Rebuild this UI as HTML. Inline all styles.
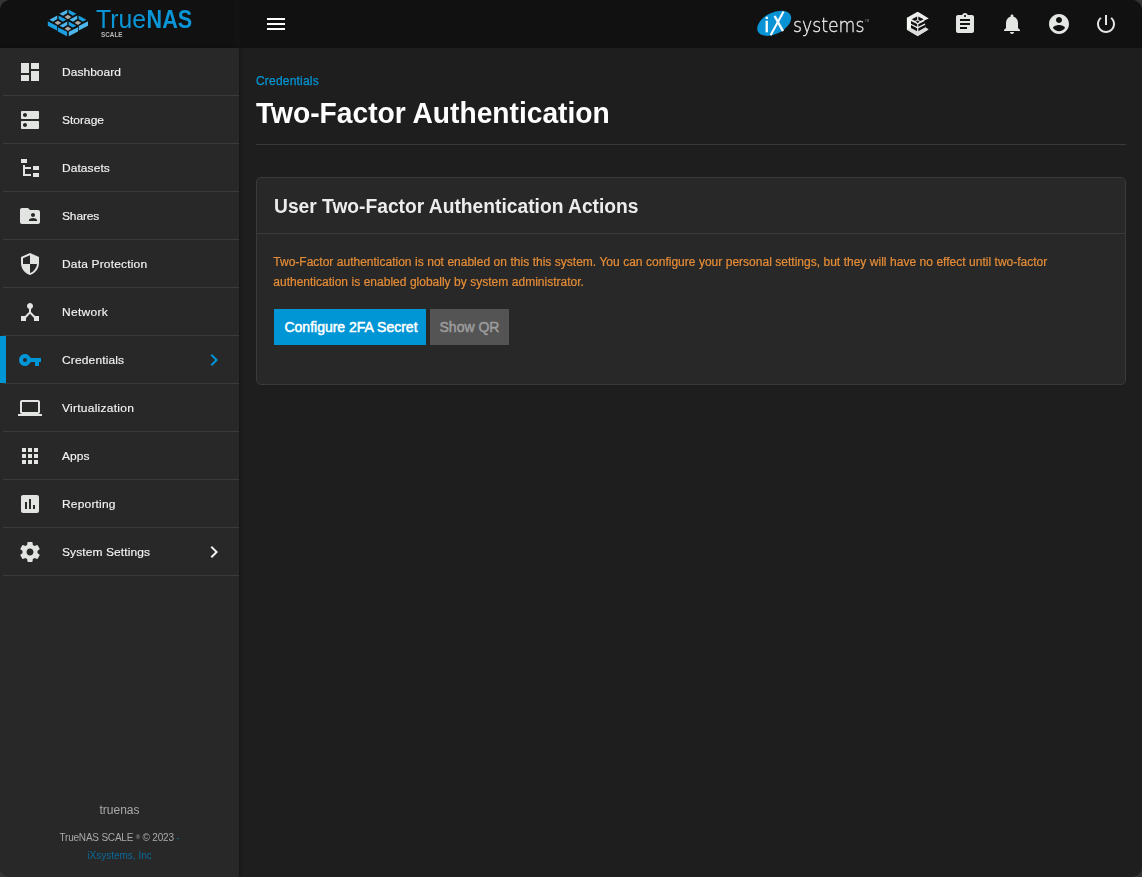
<!DOCTYPE html>
<html lang="en">
<head>
<meta charset="utf-8">
<title>TrueNAS - Two-Factor Authentication</title>
<style>
*{box-sizing:border-box;}
html,body{margin:0;padding:0;}
body{width:1142px;height:877px;overflow:hidden;background:#343434;font-family:"Liberation Sans",sans-serif;color:#fff;}
#app{position:relative;width:1142px;height:877px;border-radius:10px;overflow:hidden;background:#1e1e1e;}
#topbar{position:absolute;left:0;top:0;width:1142px;height:48px;background:#111111;}
#sidebar{position:absolute;left:0;top:48px;width:239px;height:829px;background:#282828;box-shadow:1px 0 3px rgba(0,0,0,.35);}
#topshade{position:absolute;left:0;top:0;width:240px;height:48px;background:linear-gradient(90deg,rgba(255,255,255,0) 0,rgba(255,255,255,0) 230px,rgba(255,255,255,.012) 239px,rgba(0,0,0,.0) 240px);}
.logo{position:absolute;left:0;top:0;will-change:transform;}
.tb-icon{position:absolute;top:12px;width:24px;height:24px;fill:#e4e6e4;}
ul.nav{list-style:none;margin:0;padding:0;}
ul.nav li{position:relative;height:48px;margin-left:3px;border-bottom:1px solid #3a3a3a;}
ul.nav li svg.ic{position:absolute;left:15px;top:12px;width:24px;height:24px;fill:#e2e4e2;}
ul.nav li span{position:absolute;left:59px;top:0;line-height:48px;font-size:12px;color:#f4f4f4;white-space:nowrap;letter-spacing:0;transform:scaleY(.94);transform-origin:0 28px;-webkit-text-stroke:.15px #f4f4f4;}
ul.nav li svg.chev{position:absolute;left:199px;top:12px;width:24px;height:24px;fill:#f0f0f0;}
ul.nav li.active:before{content:"";position:absolute;left:-3px;top:0;width:6px;height:47px;background:#0095d5;}
ul.nav li.active svg.ic, ul.nav li.active svg.chev{fill:#0095d5;}
.foot{position:absolute;left:0;width:239px;text-align:center;white-space:nowrap;}
#main{position:absolute;left:240px;top:48px;width:902px;height:829px;}
.crumb{position:absolute;left:16px;top:26px;font-size:12px;line-height:14px;color:#0095d5;white-space:nowrap;letter-spacing:.2px;-webkit-text-stroke:.25px #0095d5;}
h1{position:absolute;left:16px;top:47px;margin:0;font-size:29.5px;line-height:36px;transform:scaleX(.955);font-weight:bold;color:#fff;white-space:nowrap;transform-origin:0 50%;}
.hr{position:absolute;left:16px;top:96px;width:870px;height:1px;background:#3a3a3a;}
.card{position:absolute;left:16px;top:129px;width:870px;height:208px;background:#282828;border:1px solid #3a3a3a;border-radius:5px;}
.card h3{position:absolute;left:16.5px;top:14px;margin:0;font-size:20px;line-height:28px;transform:scaleX(.961);font-weight:bold;color:#ececec;white-space:nowrap;transform-origin:0 50%;}
.card .sep{position:absolute;left:0;top:55px;width:868px;height:1px;background:#3a3a3a;}
.card p{position:absolute;left:16.3px;top:74px;width:800px;word-spacing:.17px;margin:0;font-size:12px;line-height:20px;color:#e68d37;-webkit-text-stroke:.2px #e68d37;}
.btn{position:absolute;top:131px;height:36px;line-height:36px;font-size:14px;font-weight:normal;text-align:center;white-space:nowrap;letter-spacing:0;-webkit-text-stroke:.5px currentColor;}
.btn.primary{left:17px;width:152px;padding-left:2px;background:#0095d5;color:#fff;}
.btn.disabled{left:173px;width:79px;background:#545454;color:#9c9c9c;}
</style>
</head>
<body>
<div id="app">
  <div id="topbar">
    <div id="topshade"></div>
    <svg class="logo" width="240" height="48" viewBox="0 0 240 48">
<polygon points="59.40,13.85 67.25,9.70 67.25,13.10 63.00,15.75" fill="#4db7ec"/>
<polygon points="76.40,13.85 68.55,9.70 68.55,13.10 72.80,15.75" fill="#1a9fe1"/>
<polygon points="64.50,16.90 67.90,14.80 71.30,16.90 67.90,19.20" fill="#a9a9a9"/>
<circle cx="67.90" cy="17.10" r="0.42" fill="#f0c060"/>
<polygon points="49.40,19.75 57.25,15.60 57.25,19.00 53.00,21.65" fill="#4db7ec"/>
<polygon points="66.40,19.75 58.55,15.60 58.55,19.00 62.80,21.65" fill="#1a9fe1"/>
<polygon points="54.50,22.80 57.90,20.70 61.30,22.80 57.90,25.10" fill="#a9a9a9"/>
<circle cx="57.90" cy="23.00" r="0.42" fill="#f0c060"/>
<polygon points="47.80,21.30 57.05,25.95 57.05,30.40 47.80,25.70" fill="#1a9fe1"/>
<polygon points="69.40,19.75 77.25,15.60 77.25,19.00 73.00,21.65" fill="#4db7ec"/>
<polygon points="86.40,19.75 78.55,15.60 78.55,19.00 82.80,21.65" fill="#1a9fe1"/>
<polygon points="74.50,22.80 77.90,20.70 81.30,22.80 77.90,25.10" fill="#a9a9a9"/>
<circle cx="77.90" cy="23.00" r="0.42" fill="#f0c060"/>
<polygon points="88.00,21.30 78.75,25.95 78.75,30.40 88.00,25.70" fill="#4db7ec"/>
<polygon points="59.40,25.65 67.25,21.50 67.25,24.90 63.00,27.55" fill="#4db7ec"/>
<polygon points="76.40,25.65 68.55,21.50 68.55,24.90 72.80,27.55" fill="#1a9fe1"/>
<polygon points="64.50,28.70 67.90,26.60 71.30,28.70 67.90,31.00" fill="#a9a9a9"/>
<circle cx="67.90" cy="28.90" r="0.42" fill="#f0c060"/>
<polygon points="57.80,27.20 67.05,31.85 67.05,36.30 57.80,31.60" fill="#1a9fe1"/>
<polygon points="78.00,27.20 68.75,31.85 68.75,36.30 78.00,31.60" fill="#4db7ec"/>

      <text x="96" y="28.2" font-family="'Liberation Sans',sans-serif" font-size="25" fill="#0a95d6" textLength="50" lengthAdjust="spacingAndGlyphs">True</text>
      <text x="146.6" y="28.2" font-family="'Liberation Sans',sans-serif" font-size="25" font-weight="bold" fill="#0a95d6" textLength="45.6" lengthAdjust="spacingAndGlyphs">NAS</text>
      <text x="101" y="37.1" font-family="'Liberation Sans',sans-serif" font-size="7.5" font-weight="bold" fill="#b9b9b9" textLength="21.5" lengthAdjust="spacingAndGlyphs">SCALE</text>
    </svg>
    <svg class="tb-icon" style="left:264px" viewBox="0 0 24 24"><path fill="#fff" d="M3 18h18v-2H3v2zm0-5h18v-2H3v2zm0-7v2h18V6H3z"/></svg>
    <svg class="ix" style="position:absolute;left:750px;top:0;will-change:transform" width="130" height="48" viewBox="750 0 130 48">
      <ellipse cx="774.2" cy="23.3" rx="18.3" ry="10.6" fill="#0a93d4" transform="rotate(-27 774.2 23.3)"/>
      <text x="764.6" y="31.8" font-family="'Liberation Sans',sans-serif" font-size="21" fill="#fff" stroke="#fff" stroke-width=".35">i</text>
      <line x1="770.6" y1="35.2" x2="783.6" y2="11.4" stroke="#fff" stroke-width="2"/>
      <line x1="774.6" y1="16" x2="783" y2="31.2" stroke="#eef7fc" stroke-width="2.4"/>
      <text x="793" y="31.7" font-family="'DejaVu Sans Light','DejaVu Sans',sans-serif" font-weight="200" font-size="20" fill="#ededed" stroke="#ededed" stroke-width=".3" textLength="71.4" lengthAdjust="spacingAndGlyphs">systems</text>
      <text x="865" y="22.4" font-family="'Liberation Sans',sans-serif" font-size="2.8" fill="#9a9a9a">TM</text>
    </svg>
    <svg class="tb-icon" style="left:906px" viewBox="0 0 24 24">
      <path fill="#eceeec" d="M11.7 -0.35 L22.8 6.4 L18.3 8.6 L19.2 12.2 L19.36 15.16 L22.46 17.5 L11.7 24.1 L0.93 17.7 L0.93 5.85 Z"/>
      <path fill="#fafcfa" d="M0.93 5.85 L4.96 8.1 L4.96 16 L0.93 17.7 Z"/>
      <path fill="#dcdedc" d="M0.93 17.7 L4.96 16 L11.7 19.7 L19.36 15.16 L22.46 17.5 L11.7 24.1 Z"/>
      <g fill="#111">
        <path d="M5.7 7.3 L11.1 4.5 L11.1 8.0 L8.9 9.0 Z"/>
        <path d="M17.7 7.3 L12.3 4.5 L12.3 8.0 L14.5 9.0 Z"/>
        <path d="M9.7 9.64 L11.69 8.6 L13.7 9.64 L11.69 10.9 Z"/>
        <path d="M4.96 9.0 L11.1 12.1 L11.1 14.65 L4.96 11.85 Z"/>
        <path d="M4.96 13.1 L11.1 16.2 L11.1 19.2 L4.96 16.05 Z"/>
        <path d="M12.3 12.15 L18.6 9.0 L19.8 8.5 L19.8 10.9 L12.3 14.65 Z"/>
        <path d="M12.3 16.3 L19.8 12.55 L19.8 15.3 L19.36 15.3 L12.3 19.2 Z"/>
      </g>
    </svg>
    <svg class="tb-icon" style="left:953px" viewBox="0 0 24 24"><path d="M19 3h-4.180C14.400 1.840 13.300 1 12 1c-1.300 0-2.400.84-2.820 2H5c-1.100 0-2 .9-2 2v14c0 1.100.9 2 2 2h14c1.100 0 2-.9 2-2V5c0-1.100-.9-2-2-2zm-7 0c.55 0 1 .45 1 1s-.45 1-1 1-1-.45-1-1 .45-1 1-1zm2 14H7v-2h7v2zm3-4H7v-2h10v2zm0-4H7V7h10v2z"/></svg>
    <svg class="tb-icon" style="left:1000px" viewBox="0 0 24 24"><path d="M12 22c1.100 0 2-.9 2-2h-4c0 1.100.89 2 2 2zm6-6v-5c0-3.070-1.640-5.640-4.500-6.320V4c0-.83-.67-1.500-1.500-1.500s-1.500.67-1.500 1.500v.68C7.630 5.360 6 7.920 6 11v5l-2 2v1h16v-1l-2-2z"/></svg>
    <svg class="tb-icon" style="left:1047px" viewBox="0 0 24 24"><path d="M12 2C6.480 2 2 6.480 2 12s4.480 10 10 10 10-4.480 10-10S17.520 2 12 2zm0 3c1.660 0 3 1.340 3 3s-1.340 3-3 3-3-1.340-3-3 1.340-3 3-3zm0 14.200c-2.500 0-4.710-1.280-6-3.220.03-1.990 4-3.080 6-3.080 1.990 0 5.970 1.090 6 3.080-1.290 1.940-3.500 3.220-6 3.220z"/></svg>
    <svg class="tb-icon" style="left:1094px" viewBox="0 0 24 24"><path d="M13 3h-2v10h2V3zm4.830 2.170l-1.420 1.420C17.990 7.860 19 9.810 19 12c0 3.870-3.130 7-7 7s-7-3.130-7-7c0-2.190 1.010-4.140 2.580-5.420L6.170 5.170C4.230 6.820 3 9.260 3 12c0 4.970 4.030 9 9 9s9-4.030 9-9c0-2.740-1.230-5.180-3.170-6.830z"/></svg>
  </div>
  <div id="sidebar">
    <ul class="nav">
      <li><svg class="ic" viewBox="0 0 24 24"><path d="M3 13h8V3H3v10zm0 8h8v-6H3v6zm10 0h8V11h-8v10zm0-18v6h8V3h-8z"/></svg><span style="letter-spacing:0.03px">Dashboard</span></li>
      <li><svg class="ic" viewBox="0 0 24 24"><path d="M20 13H4c-.55 0-1 .45-1 1v6c0 .55.45 1 1 1h16c.55 0 1-.45 1-1v-6c0-.55-.45-1-1-1zM7 19c-1.1 0-2-.9-2-2s.9-2 2-2 2 .9 2 2-.9 2-2 2zM20 3H4c-.55 0-1 .45-1 1v6c0 .55.45 1 1 1h16c.55 0 1-.45 1-1V4c0-.55-.45-1-1-1zM7 9c-1.1 0-2-.9-2-2s.9-2 2-2 2 .9 2 2-.9 2-2 2z"/></svg><span style="letter-spacing:0.00px">Storage</span></li>
      <li><svg class="ic" viewBox="0 0 24 24"><path d="M3 3h6v4H3zM5 9h2v2h6v2H7v5h6v2H5zM15 10h6v4h-6zM15 17h6v4h-6z"/></svg><span style="letter-spacing:0.06px">Datasets</span></li>
      <li><svg class="ic" viewBox="0 0 24 24"><path d="M20 6h-8l-2-2H4c-1.1 0-1.990.9-1.990 2L2 18c0 1.100.9 2 2 2h16c1.100 0 2-.9 2-2V8c0-1.100-.9-2-2-2zm-5 3c1.100 0 2 .9 2 2s-.9 2-2 2-2-.9-2-2 .9-2 2-2zm4 8h-8v-1c0-1.330 2.670-2 4-2s4 .670 4 2v1z"/></svg><span style="letter-spacing:-0.15px">Shares</span></li>
      <li><svg class="ic" viewBox="0 0 24 24"><path d="M12 1L3 5v6c0 5.550 3.840 10.740 9 12 5.160-1.260 9-6.450 9-12V5l-9-4zm0 10.990h7c-.53 4.120-3.280 7.790-7 8.940V12H5V6.300l7-3.110v8.800z"/></svg><span style="letter-spacing:0.17px">Data Protection</span></li>
      <li><svg class="ic" viewBox="0 0 24 24"><path d="M17 16l-4-4V8.820C14.160 8.400 15 7.300 15 6c0-1.660-1.340-3-3-3S9 4.340 9 6c0 1.300.84 2.400 2 2.820V12l-4 4H3v5h5v-3.050l4-4.200 4 4.200V21h5v-5h-4z"/></svg><span style="letter-spacing:0.31px">Network</span></li>
      <li class="active"><svg class="ic" viewBox="0 0 24 24"><path d="M12.650 10C11.830 7.670 9.610 6 7 6c-3.310 0-6 2.690-6 6s2.690 6 6 6c2.610 0 4.830-1.670 5.650-4H17v4h4v-4h2v-4H12.650zM7 14c-1.100 0-2-.9-2-2s.9-2 2-2 2 .9 2 2-.9 2-2 2z"/></svg><span style="letter-spacing:0.14px">Credentials</span><svg class="chev" viewBox="0 0 24 24"><path d="M10 6L8.590 7.410 13.170 12l-4.580 4.590L10 18l6-6z"/></svg></li>
      <li><svg class="ic" viewBox="0 0 24 24"><path d="M20 18c1.100 0 1.990-.9 1.990-2L22 6c0-1.100-.9-2-2-2H4c-1.100 0-2 .9-2 2v10c0 1.100.9 2 2 2H0v2h24v-2h-4zM4 6h16v10H4V6z"/></svg><span style="letter-spacing:0.26px">Virtualization</span></li>
      <li><svg class="ic" viewBox="0 0 24 24"><path d="M4 8h4V4H4v4zm6 12h4v-4h-4v4zm-6 0h4v-4H4v4zm0-6h4v-4H4v4zm6 0h4v-4h-4v4zm6-10v4h4V4h-4zm-6 4h4V4h-4v4zm6 6h4v-4h-4v4zm0 6h4v-4h-4v4z"/></svg><span style="letter-spacing:0.07px">Apps</span></li>
      <li><svg class="ic" viewBox="0 0 24 24"><path d="M19 3H5c-1.100 0-2 .9-2 2v14c0 1.100.9 2 2 2h14c1.100 0 2-.9 2-2V5c0-1.100-.9-2-2-2zM9 17H7v-7h2v7zm4 0h-2V7h2v10zm4 0h-2v-4h2v4z"/></svg><span style="letter-spacing:0.18px">Reporting</span></li>
      <li><svg class="ic" viewBox="0 0 24 24"><path d="M19.43 12.98c.04-.32.07-.64.07-.98s-.03-.66-.07-.98l2.11-1.65c.19-.15.24-.42.12-.64l-2-3.46c-.12-.22-.39-.3-.61-.22l-2.49 1c-.52-.4-1.08-.73-1.69-.98l-.38-2.65C14.46 2.18 14.25 2 14 2h-4c-.25 0-.46.18-.49.42l-.38 2.65c-.61.25-1.17.59-1.69.98l-2.49-1c-.23-.09-.49 0-.61.22l-2 3.46c-.13.22-.07.49.12.64l2.11 1.65c-.04.32-.07.65-.07.98s.03.66.07.98l-2.11 1.65c-.19.15-.24.42-.12.64l2 3.46c.12.22.39.3.61.22l2.49-1c.52.4 1.08.73 1.69.98l.38 2.65c.03.24.24.42.49.42h4c.25 0 .46-.18.49-.42l.38-2.65c.61-.25 1.17-.59 1.69-.98l2.49 1c.23.09.49 0 .61-.22l2-3.46c.12-.22.07-.49-.12-.64l-2.11-1.65zM12 15.5c-1.930 0-3.500-1.570-3.500-3.500s1.570-3.500 3.500-3.500 3.500 1.570 3.500 3.500-1.570 3.500-3.500 3.500z"/></svg><span style="letter-spacing:0.09px">System Settings</span><svg class="chev" viewBox="0 0 24 24"><path d="M10 6L8.590 7.410 13.170 12l-4.580 4.590L10 18l6-6z"/></svg></li>
    </ul>
    <div class="foot" style="top:755px;font-size:12px;line-height:14px;color:#a9a9a9;">truenas</div>
    <div class="foot" style="top:784px;font-size:10px;line-height:12px;color:#a9a9a9;letter-spacing:-.2px;">TrueNAS SCALE <span style="font-size:6px;position:relative;top:-2px;">®</span> © 2023 <span style="color:#0c6a99">-</span></div>
    <div class="foot" style="top:801.5px;font-size:10px;line-height:12px;color:#0c6a99;">iXsystems, Inc</div>
  </div>
  <div id="main">
    <div class="crumb">Credentials</div>
    <h1>Two-Factor Authentication</h1>
    <div class="hr"></div>
    <div class="card">
      <h3>User Two-Factor Authentication Actions</h3>
      <div class="sep"></div>
      <p>Two-Factor authentication is not enabled on this this system. You can configure your personal settings, but they will have no effect until two-factor authentication is enabled globally by system administrator.</p>
      <div class="btn primary">Configure 2FA Secret</div>
      <div class="btn disabled">Show QR</div>
    </div>
  </div>
</div>
</body>
</html>
